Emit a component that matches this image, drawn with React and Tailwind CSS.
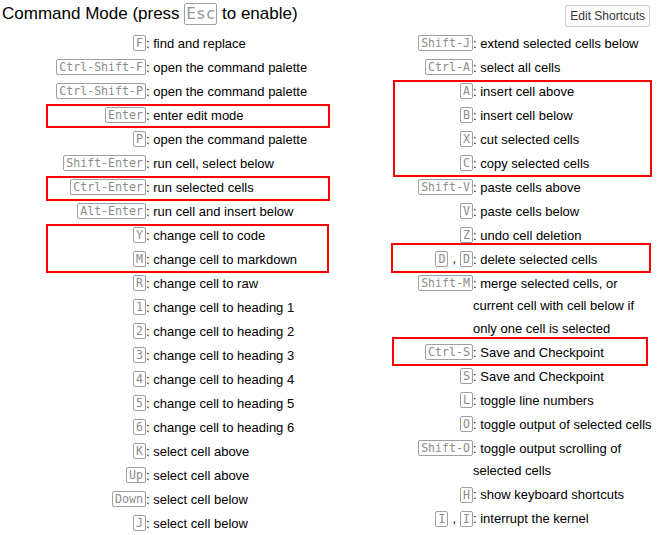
const leftRows = [
  { keys: ["F"], text: "find and replace" },
  { keys: ["Ctrl-Shift-F"], text: "open the command palette" },
  { keys: ["Ctrl-Shift-P"], text: "open the command palette" },
  { keys: ["Enter"], text: "enter edit mode" },
  { keys: ["P"], text: "open the command palette" },
  { keys: ["Shift-Enter"], text: "run cell, select below" },
  { keys: ["Ctrl-Enter"], text: "run selected cells" },
  { keys: ["Alt-Enter"], text: "run cell and insert below" },
  { keys: ["Y"], text: "change cell to code" },
  { keys: ["M"], text: "change cell to markdown" },
  { keys: ["R"], text: "change cell to raw" },
  { keys: ["1"], text: "change cell to heading 1" },
  { keys: ["2"], text: "change cell to heading 2" },
  { keys: ["3"], text: "change cell to heading 3" },
  { keys: ["4"], text: "change cell to heading 4" },
  { keys: ["5"], text: "change cell to heading 5" },
  { keys: ["6"], text: "change cell to heading 6" },
  { keys: ["K"], text: "select cell above" },
  { keys: ["Up"], text: "select cell above" },
  { keys: ["Down"], text: "select cell below" },
  { keys: ["J"], text: "select cell below" },
]

const rightRows = [
  { keys: ["Shift-J"], text: "extend selected cells below" },
  { keys: ["Ctrl-A"], text: "select all cells" },
  { keys: ["A"], text: "insert cell above" },
  { keys: ["B"], text: "insert cell below" },
  { keys: ["X"], text: "cut selected cells" },
  { keys: ["C"], text: "copy selected cells" },
  { keys: ["Shift-V"], text: "paste cells above" },
  { keys: ["V"], text: "paste cells below" },
  { keys: ["Z"], text: "undo cell deletion" },
  { keys: ["D", "D"], text: "delete selected cells" },
  { keys: ["Shift-M"], text: "merge selected cells, or current cell with cell below if only one cell is selected" },
  { keys: ["Ctrl-S"], text: "Save and Checkpoint" },
  { keys: ["S"], text: "Save and Checkpoint" },
  { keys: ["L"], text: "toggle line numbers" },
  { keys: ["O"], text: "toggle output of selected cells" },
  { keys: ["Shift-O"], text: "toggle output scrolling of selected cells" },
  { keys: ["H"], text: "show keyboard shortcuts" },
  { keys: ["I", "I"], text: "interrupt the kernel" },
  { keys: ["0", "0"], text: "" },
]

// red annotation boxes drawn over the dialog
const marks = [
  "left-[46px] top-[104px] w-[284px] h-[24px]",
  "left-[46px] top-[176px] w-[284px] h-[25px]",
  "left-[46px] top-[224px] w-[283px] h-[49px]",
  "left-[393px] top-[80px] w-[259px] h-[97px]",
  "left-[391px] top-[243px] w-[260px] h-[30px]",
  "left-[392px] top-[337px] w-[256px] h-[29px]",
]

const Kbd = ({ children }) => (
  <kbd className="inline-block px-[2px] border border-[#a0a0a0] rounded-[2px] text-[#8c8c8c] font-['DejaVu_Sans_Mono',monospace] text-[11.6px] leading-[14px] align-middle">
    {children}
  </kbd>
)

const Row = ({ keys, text, keyWidth }) => (
  <div className="flex items-start">
    <div className={`${keyWidth} shrink-0 h-[24px] flex items-center justify-end`}>
      {keys.map((k, i) => (
        <span key={i} className="flex items-center">
          {i > 0 && <span className="px-[4px] text-[13px]">,</span>}
          <Kbd>{k}</Kbd>
        </span>
      ))}
    </div>
    {text && <div className="flex-1 pt-[1.5px] leading-[22.5px]">: {text}</div>}
  </div>
)

export default function App() {
  return (
    <div className="relative w-[658px] h-[535px] overflow-hidden bg-white text-black text-[13px] font-['Liberation_Sans',Arial,sans-serif]">
      <div className="flex items-start justify-between h-[31px]">
        <h4 className="pl-[2px] pt-[3px] text-[17px] leading-[22px]">
          Command Mode (press{" "}
          <kbd className="inline-block align-top px-[1px] border border-[#a0a0a0] rounded-[2px] text-[#999] font-['DejaVu_Sans_Mono',monospace] text-[16px] leading-[20px]">
            Esc
          </kbd>{" "}
          to enable)
        </h4>
        <button className="mt-[5px] mr-[8px] h-[22px] px-[4px] border border-[#ccc] rounded-[2px] bg-white text-[12px] text-[#333]">
          Edit Shortcuts
        </button>
      </div>

      <div className="grid grid-cols-[327px_1fr]">
        <div>
          {leftRows.map((r, i) => (
            <Row key={i} {...r} keyWidth="w-[146px]" />
          ))}
        </div>
        <div>
          {rightRows.map((r, i) => (
            <Row key={i} {...r} keyWidth="w-[146px]" />
          ))}
        </div>
      </div>

      {marks.map((m, i) => (
        <div key={i} className={`absolute ${m} border-2 border-[#ff0000] pointer-events-none`} />
      ))}
    </div>
  )
}
